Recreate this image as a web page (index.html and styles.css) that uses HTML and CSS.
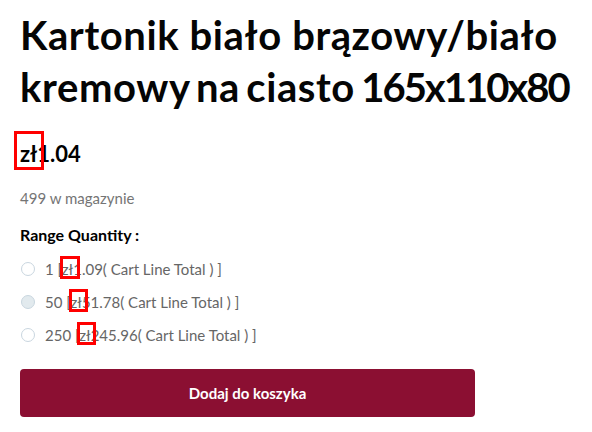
FILE: index.html
```html
<!DOCTYPE html>
<html lang="pl">
<head>
<meta charset="utf-8">
<link rel="stylesheet" href="styles.css">
</head>
<body>
<div class="product">
  <h1 class="title">Kartonik biało brązowy/biało <span class="line2">kremowy na ciasto <span class="dims">165x110x80</span></span></h1>
  <p class="price"><span class="mark mark-price">zł</span>1.04</p>
  <p class="stock">499 w magazynie</p>
  <div class="range">
    <p class="range-label">Range Quantity :</p>
    <label class="option"><span class="radio"></span><span class="opt-text">1 [<span class="mark mark-1">zł</span>1.09( Cart Line Total ) ]</span></label>
    <label class="option"><span class="radio radio-hover"></span><span class="opt-text">50 [<span class="mark mark-2">zł</span>51.78( Cart Line Total ) ]</span></label>
    <label class="option"><span class="radio"></span><span class="opt-text">250 [<span class="mark mark-3">zł</span>245.96( Cart Line Total ) ]</span></label>
  </div>
  <button class="add">Dodaj do koszyka</button>
</div>
</body>
</html>
```
FILE: styles.css
```css
* { box-sizing: border-box; }
body {
  margin: 0;
  background: #fff;
  font-family: Lato, "Noto Sans", sans-serif;
  color: #000;
}
.product {
  padding: 9px 0 0 20px;
  width: 592px;
}
.title {
  margin: 0;
  font-size: 40px;
  line-height: 52px;
  font-weight: 700;
  letter-spacing: 0.6px;
  color: #050505;
}
.line2 { word-spacing: -4px; }
.dims { letter-spacing: -2px; }
.price {
  margin: 27px 0 0 0;
  font-size: 22px;
  font-weight: 700;
  line-height: 28px;
}
.mark { position: relative; }
.mark::after {
  content: "";
  position: absolute;
  border: 3px solid #ff0000;
}
.mark-price::after { left: -6px; width: 24px; top: -9px; bottom: -3px; }
.mark-1::after { left: -2px; width: 14px; top: -4px; bottom: -1px; }
.mark-2::after { left: -2px; width: 13px; top: -4px; bottom: -1px; }
.mark-3::after { left: -2px; width: 13px; top: -4px; bottom: -1px; }
.stock {
  margin: 21px 0 0 0;
  font-size: 15px;
  color: #757575;
  line-height: 18px;
}
.range { margin-top: 18px; }
.range-label {
  margin: 0 0 7px 0;
  font-size: 16px;
  font-weight: 700;
  line-height: 20px;
}
.option {
  display: flex;
  align-items: center;
  gap: 10px;
  height: 33px;
  font-size: 15px;
  color: #666;
}
.radio {
  margin-left: 1px;
  width: 14px;
  height: 14px;
  border: 1px solid #c9d6df;
  border-radius: 50%;
  background: #fff;
}
.radio-hover { background: #e2eaee; }
.add {
  display: block;
  margin-top: 18px;
  width: 455px;
  height: 48px;
  border: 0;
  border-radius: 4px;
  background: #8b0f32;
  color: #fff;
  font-family: Lato, sans-serif;
  font-weight: 700;
  font-size: 15px;
}
```
